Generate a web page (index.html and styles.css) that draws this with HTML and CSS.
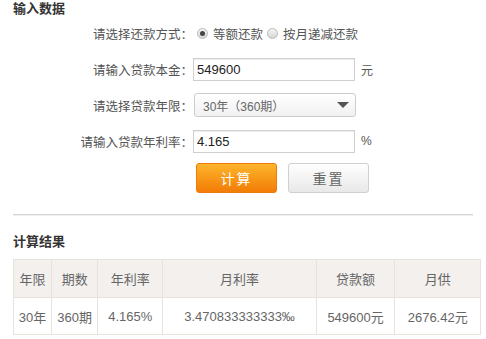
FILE: index.html
```html
<!doctype HTML>
<html>
    <head>
        <title>房贷计算器</title>
        <meta content="text/html;charset=utf-8" http-equiv="Content-Type">
        <meta name="viewport" content="width=device-width, initial-scale=1">
        <link rel="stylesheet" href="styles.css">
    </head>

    <body>
        <section class="page">
            <h2 class="title">输入数据</h2>

            <div class="form">
                <div class="row">
                    <span class="lbl">请选择还款方式：</span>
                    <div class="field">
                        <span class="radio checked"></span><span class="opt">等额还款</span>
                        <span class="radio"></span><span class="opt">按月递减还款</span>
                    </div>
                </div>

                <div class="row">
                    <span class="lbl">请输入贷款本金：</span>
                    <div class="field">
                        <input class="text" type="text" value="549600">
                        <span class="unit">元</span>
                    </div>
                </div>

                <div class="row">
                    <span class="lbl">请选择贷款年限：</span>
                    <div class="field">
                        <div class="select">
                            <span>30年（360期）</span>
                            <span class="arrow"></span>
                        </div>
                    </div>
                </div>

                <div class="row">
                    <span class="lbl">请输入贷款年利率：</span>
                    <div class="field">
                        <input class="text" type="text" value="4.165">
                        <span class="unit">%</span>
                    </div>
                </div>

                <div class="row buttons">
                    <span class="lbl"></span>
                    <div class="field">
                        <button class="btn calc">计算</button>
                        <button class="btn reset">重置</button>
                    </div>
                </div>
            </div>

            <hr class="divider">

            <h2 class="title">计算结果</h2>

            <table class="result">
                <thead>
                    <tr>
                        <th class="c1">年限</th>
                        <th class="c2">期数</th>
                        <th class="c3">年利率</th>
                        <th class="c4">月利率</th>
                        <th class="c5">贷款额</th>
                        <th class="c6">月供</th>
                    </tr>
                </thead>
                <tbody>
                    <tr>
                        <td>30年</td>
                        <td>360期</td>
                        <td>4.165%</td>
                        <td>3.470833333333‰</td>
                        <td>549600元</td>
                        <td>2676.42元</td>
                    </tr>
                </tbody>
            </table>
        </section>
    </body>
</html>
```

FILE: styles.css
```css
html {
    background: #fff;
}

body {
    margin: 0;
    color: #555;
    font-family: "Liberation Sans", "Noto Sans CJK SC", sans-serif;
    font-size: 12px;
}

.page {
    padding: 0 5px 0 13px;
}

.title {
    margin: 0;
    font-size: 13px;
    line-height: 18px;
    font-weight: bold;
    color: #333;
}

.form {
    margin-top: -3px;
}

.row {
    display: grid;
    grid-template-columns: 180px 1fr;
    column-gap: 0;
    align-items: center;
    height: 36px;
}

.lbl {
    text-align: right;
    font-size: 12.5px;
    color: #555;
}

.field {
    display: flex;
    align-items: center;
}

.radio {
    width: 9px;
    height: 9px;
    border: 1px solid #b9b9b9;
    border-radius: 50%;
    background: linear-gradient(#f4f4f4, #d6d6d6);
    margin: 0 5px 0 4px;
    position: relative;
}

.radio.checked::after {
    content: "";
    position: absolute;
    left: 2px;
    top: 2px;
    width: 5px;
    height: 5px;
    border-radius: 50%;
    background: #444;
}

.opt {
    font-size: 12.5px;
    color: #555;
}

.text {
    box-sizing: border-box;
    width: 162px;
    height: 23px;
    border: 1px solid #cfcfcf;
    padding: 0 3px;
    margin: 0;
    font-family: "Liberation Sans", sans-serif;
    font-size: 13px;
    color: #222;
    box-shadow: inset 0 1px 1px #eee;
}

.unit {
    margin-left: 6px;
    font-size: 12px;
    color: #555;
}

.select {
    box-sizing: border-box;
    width: 162px;
    height: 24px;
    margin-left: 1px;
    border: 1px solid #cdcdcd;
    border-radius: 3px;
    background: linear-gradient(#fff, #f1f1f1);
    display: flex;
    align-items: center;
    justify-content: space-between;
    padding: 0 6px 0 8px;
    font-size: 12px;
    color: #666;
}

.arrow {
    width: 0;
    height: 0;
    border-left: 6px solid transparent;
    border-right: 6px solid transparent;
    border-top: 6px solid #555;
}

.row.buttons {
    height: 30px;
    margin-top: 4px;
}

.btn {
    box-sizing: border-box;
    height: 30px;
    width: 81px;
    border-radius: 3px;
    font-family: "Noto Sans CJK SC", sans-serif;
    font-size: 14px;
    padding: 0;
    cursor: pointer;
}

.btn.calc {
    margin-left: 3px;
    color: #fff;
    border: 1px solid #ec7a0c;
    background: linear-gradient(#fdb52c, #f27c06);
    letter-spacing: 2px;
}

.btn.reset {
    margin-left: 11px;
    color: #666;
    border: 1px solid #d0d0d0;
    background: linear-gradient(#fff, #e8e8e8);
    letter-spacing: 2px;
}

.divider {
    margin: 21px 8px 17px 0;
    border: 0;
    border-top: 1px solid #d4d4d4;
    border-bottom: 1px solid #efefef;
}

.result {
    margin-top: 8px;
    border-collapse: collapse;
    width: 468px;
    font-size: 13px;
    color: #666;
}

.result th,
.result td {
    border: 1px solid #e8e2dd;
    text-align: center;
    font-weight: normal;
    padding: 0;
}

.result th {
    background: #f3f0ee;
    height: 37px;
}

.result td {
    height: 36px;
}

.c1 { width: 38px; }
.c2 { width: 46px; }
.c3 { width: 65px; }
.c4 { width: 154px; }
.c5 { width: 79px; }
.c6 { width: 86px; }
```
